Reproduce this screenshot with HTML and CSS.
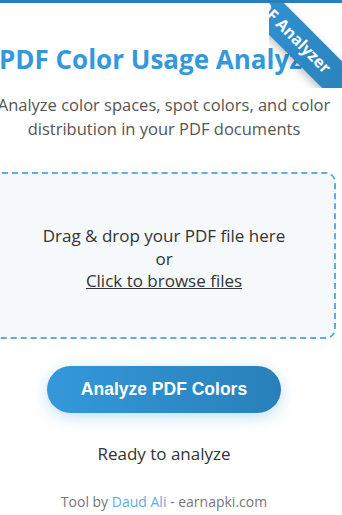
FILE: index.html
```html
<!DOCTYPE html>
<html lang="en">

<head>
    <meta charset="UTF-8">
    <meta name="viewport" content="width=device-width, initial-scale=1.0">
    <title>PDF Color Usage Analyzer</title>
    <link rel="stylesheet" href="styles.css">
</head>

<body>
    <div class="container">
        <div class="ribbon"><span>PDF Analyzer</span></div>

        <h1>PDF Color Usage Analyzer</h1>
        <p class="subtitle">Analyze color spaces, spot colors, and color distribution in your PDF documents</p>

        <div class="drop-zone" id="dropZone">
            <p>Drag &amp; drop your PDF file here<br>or<br><span class="browse">Click to browse files</span></p>
            <input type="file" id="fileInput" accept="application/pdf" hidden>
        </div>

        <button class="analyze-btn" id="analyzeBtn">Analyze PDF Colors</button>

        <div class="status" id="status">Ready to analyze</div>

        <div class="footer">Tool by <a href="#">Daud Ali</a> - earnapki.com</div>
    </div>
</body>

</html>
```

FILE: styles.css
```css
body {
    margin: 0;
    background-color: #fff;
    color: #333;
    font-family: "Open Sans", sans-serif;
    overflow: hidden;
}

.container {
    position: relative;
    box-sizing: border-box;
    width: 384px;
    margin-left: -28px;
    padding: 0 20px;
    border-top: 3px solid #2980b9;
    text-align: center;
}

.ribbon {
    position: absolute;
    top: 0;
    right: 0;
    width: 87px;
    height: 85px;
    overflow: hidden;
    z-index: 2;
}

.ribbon span {
    position: absolute;
    left: -78px;
    top: 14px;
    width: 200px;
    height: 33px;
    line-height: 33px;
    background: linear-gradient(90deg, #3498db, #2980b9);
    color: #fff;
    font-size: 16px;
    font-weight: bold;
    text-align: center;
    transform: rotate(45deg);
    box-shadow: 0 3px 8px rgba(0, 0, 0, 0.25);
}

h1 {
    margin: 40px 0 0;
    font-size: 26px;
    line-height: 32px;
    color: #3498db;
    white-space: nowrap;
}

.subtitle {
    margin: 18px 0 0;
    font-size: 16.5px;
    line-height: 24px;
    color: #555;
}

.drop-zone {
    margin-top: 31px;
    padding: 51px 20px 44px;
    border: 2px dashed #5dade2;
    border-radius: 10px;
    background-color: #f5f9fc;
}

.drop-zone p {
    margin: 0;
    font-size: 17px;
    line-height: 22.5px;
    color: #333;
}

.browse {
    text-decoration: underline;
    cursor: pointer;
}

.analyze-btn {
    display: block;
    margin: 27px auto 0;
    padding: 14px 34px;
    border: none;
    border-radius: 50px;
    background: linear-gradient(90deg, #3498db, #2980b9);
    color: #fff;
    font-family: "Liberation Sans", Arial, sans-serif;
    font-size: 17.5px;
    font-weight: bold;
    line-height: 19px;
    box-shadow: 0 4px 15px rgba(52, 152, 219, 0.3);
    cursor: pointer;
}

.status {
    margin-top: 29px;
    font-size: 17px;
    line-height: 24px;
    color: #333;
}

.footer {
    margin-top: 26px;
    font-size: 14px;
    line-height: 20px;
    color: #777;
}

.footer a {
    color: #5dade2;
    text-decoration: none;
}
```
